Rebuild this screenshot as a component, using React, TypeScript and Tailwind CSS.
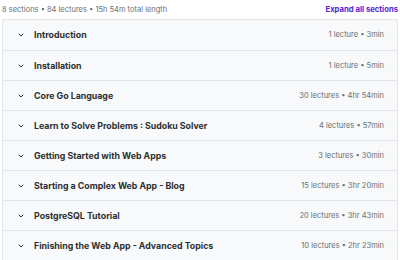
const sections = [
  { title: "Introduction", meta: "1 lecture • 3min" },
  { title: "Installation", meta: "1 lecture • 5min" },
  { title: "Core Go Language", meta: "30 lectures • 4hr 54min" },
  { title: "Learn to Solve Problems : Sudoku Solver", meta: "4 lectures • 57min" },
  { title: "Getting Started with Web Apps", meta: "3 lectures • 30min" },
  { title: "Starting a Complex Web App - Blog", meta: "15 lectures • 3hr 20min" },
  { title: "PostgreSQL Tutorial", meta: "20 lectures • 3hr 43min" },
  { title: "Finishing the Web App - Advanced Topics", meta: "10 lectures • 2hr 23min" },
];

function Chevron() {
  return (
    <svg width="8" height="8" viewBox="0 0 24 24" fill="none" stroke="#2d2f31" strokeWidth="3" strokeLinecap="round" strokeLinejoin="round">
      <path d="M6 9l6 6 6-6" />
    </svg>
  );
}

export default function App() {
  return (
    <div className="h-[260px] w-[400px] bg-white px-[2px] font-['Inter',sans-serif] text-[#2d2f31]">
      <div className="flex h-[19px] items-center justify-between">
        <span className="text-[7.5px] text-[#6a6f73]">8 sections • 84 lectures • 15h 54m total length</span>
        <span className="text-[7.7px] font-bold text-[#5624d0]">Expand all sections</span>
      </div>
      <div className="border border-[#e2e6ea]">
        {sections.map((s, i) => (
          <div
            key={s.title}
            className={`flex h-[30px] items-center justify-between bg-[#f7f9fa] pl-[14px] pr-[13px] ${i > 0 ? "border-t border-[#e2e6ea]" : ""}`}
          >
            <div className="flex items-center gap-[9px]">
              <Chevron />
              <span className="text-[8.8px] font-bold">{s.title}</span>
            </div>
            <span className="text-[7.5px] text-[#6a6f73]">{s.meta}</span>
          </div>
        ))}
      </div>
    </div>
  );
}
